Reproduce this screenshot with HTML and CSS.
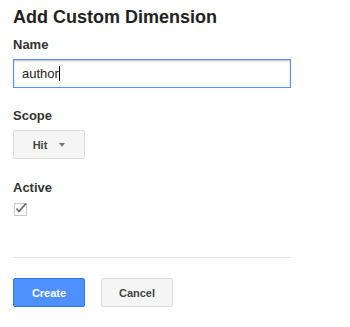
FILE: index.html
```html
<!DOCTYPE html>
<html>
<head>
<meta charset="utf-8">
<link rel="stylesheet" href="styles.css">
</head>
<body>
<div class="dialog">
  <h1 class="title">Add Custom Dimension</h1>
  <label class="label label-name">Name</label>
  <div class="input"><span class="input-text">author</span><span class="caret"></span></div>
  <label class="label label-scope">Scope</label>
  <div class="select"><span>Hit</span><span class="arrow"></span></div>
  <label class="label label-active">Active</label>
  <div class="checkbox">
    <svg width="13" height="13" viewBox="0 0 13 13"><path d="M2.5 6.5 L5 9.5 L12 1.5" fill="none" stroke="#666" stroke-width="1.6"/></svg>
  </div>
  <div class="divider"></div>
  <div class="actions">
    <div class="btn btn-primary">Create</div>
    <div class="btn btn-default">Cancel</div>
  </div>
</div>
</body>
</html>
```

FILE: styles.css
```css
html, body {
  margin: 0;
  padding: 0;
  background: #fff;
}
.dialog {
  font-family: "Liberation Sans", Arial, sans-serif;
  padding: 6px 0 0 13px;
  width: 278px;
  display: flex;
  flex-direction: column;
  align-items: flex-start;
}
.title {
  margin: 0;
  font-size: 18px;
  line-height: 22px;
  font-weight: bold;
  color: #222;
}
.label {
  display: block;
  font-size: 13px;
  line-height: 16px;
  font-weight: bold;
  color: #333;
}
.label-name { margin-top: 9px; }
.label-scope { margin-top: 20px; }
.label-active { margin-top: 21px; }
.input {
  margin-top: 6px;
  box-sizing: border-box;
  width: 278px;
  height: 29px;
  border: 1px solid #4d90fe;
  box-shadow: inset 0 1px 2px rgba(0,0,0,0.25);
  display: flex;
  align-items: center;
  padding-left: 8px;
  font-size: 13px;
  color: #222;
}
.caret {
  width: 1px;
  height: 15px;
  background: #000;
}
.select {
  margin-top: 6px;
  box-sizing: border-box;
  width: 72px;
  height: 29px;
  border: 1px solid #dcdcdc;
  border-radius: 2px;
  background: #f5f5f5;
  display: flex;
  align-items: center;
  justify-content: center;
  gap: 12px;
  font-size: 11px;
  font-weight: bold;
  color: #444;
}
.arrow {
  width: 0;
  height: 0;
  border-left: 3.5px solid transparent;
  border-right: 3.5px solid transparent;
  border-top: 4px solid #777;
  margin-top: 1px;
}
.checkbox {
  margin-top: 7px;
  margin-left: 1px;
  box-sizing: border-box;
  width: 13px;
  height: 13px;
  border: 1px solid #c6c6c6;
  position: relative;
}
.checkbox svg {
  position: absolute;
  left: -1px;
  top: -2px;
  overflow: visible;
}
.divider {
  margin-top: 41px;
  width: 278px;
  height: 1px;
  background: #e5e5e5;
}
.actions {
  margin-top: 20px;
  display: flex;
  gap: 16px;
}
.btn {
  box-sizing: border-box;
  width: 72px;
  height: 29px;
  border-radius: 2px;
  display: flex;
  align-items: center;
  justify-content: center;
  font-size: 11px;
  font-weight: bold;
}
.btn-primary {
  background: #4d90fe;
  border: 1px solid #3079ed;
  color: #fff;
}
.btn-default {
  background: #f5f5f5;
  border: 1px solid #dcdcdc;
  color: #444;
}
```
